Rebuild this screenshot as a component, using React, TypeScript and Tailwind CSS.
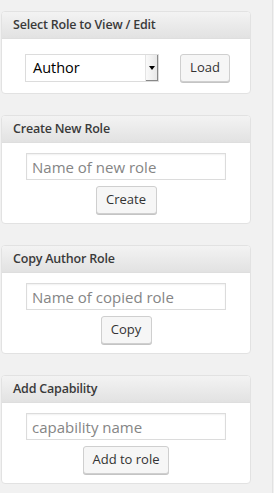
import { ReactNode } from 'react';

// Role editor sidebar — four stacked panels with a header strip and a small form.

function Panel({ title, children }: { title: string; children: ReactNode }) {
  return (
    <div className="ml-px w-[250px] overflow-hidden rounded-[4px] border border-[#e2e2e2] bg-white">
      <div className="flex h-[27px] items-center border-b border-[#dedede] bg-gradient-to-b from-[#f3f3f3] to-[#e2e2e2] pl-[11px] text-[12.5px] font-semibold tracking-[-0.2px] text-[#3a3a3a]">
        {title}
      </div>
      {children}
    </div>
  );
}

function Button({ label, width }: { label: string; width: string }) {
  return (
    <button
      className={`h-[28px] ${width} rounded-[3px] border border-[#cfcfcf] bg-[#f6f6f6] text-[13px] text-[#333] shadow-[0_1px_0_#c4c4c4]`}
    >
      {label}
    </button>
  );
}

function FormPanel({
  title,
  placeholder,
  button,
  buttonWidth,
}: {
  title: string;
  placeholder: string;
  button: string;
  buttonWidth: string;
}) {
  return (
    <Panel title={title}>
      <div className="flex flex-col items-center pt-[10px] pb-[9px]">
        <input
          type="text"
          placeholder={placeholder}
          className="h-[27px] w-[200px] border border-[#dcdcdc] px-[5px] text-[15px] text-[#333] placeholder:text-[#858585] shadow-[inset_0_1px_2px_rgba(0,0,0,0.06)] outline-none"
        />
        <div className="mt-[6px]">
          <Button label={button} width={buttonWidth} />
        </div>
      </div>
    </Panel>
  );
}

export default function App() {
  return (
    <div
      className="flex h-[493px] w-[274px] bg-[#f1f1f1]"
      style={{ fontFamily: '"Open Sans", "Noto Sans", sans-serif' }}
    >
      <div className="flex w-[272px] flex-col gap-[21px] pt-[11px]">
        <Panel title="Select Role to View / Edit">
          <div className="flex items-center pt-[15px] pb-[11px] pl-[23px]">
            <div className="relative flex h-[28px] w-[134px] items-center border border-[#dcdcdc] bg-white pl-[7px] text-[14.5px] text-black">
              Author
              <div className="absolute right-0 top-0 flex h-full w-[13px] items-center justify-center border-l border-[#e4e4e4] bg-gradient-to-r from-[#fafafa] to-[#e6e6e6] shadow-[inset_-1px_-1px_0_#888]">
                <div className="h-0 w-0 border-x-[3px] border-t-[4px] border-x-transparent border-t-black" />
              </div>
            </div>
            <div className="ml-[21px]">
              <Button label="Load" width="w-[50px]" />
            </div>
          </div>
        </Panel>
        <FormPanel title="Create New Role" placeholder="Name of new role" button="Create" buttonWidth="w-[61px]" />
        <FormPanel title="Copy Author Role" placeholder="Name of copied role" button="Copy" buttonWidth="w-[51px]" />
        <FormPanel title="Add Capability" placeholder="capability name" button="Add to role" buttonWidth="w-[86px]" />
      </div>
      <div className="w-px bg-[#e2e2e2]" />
    </div>
  );
}
